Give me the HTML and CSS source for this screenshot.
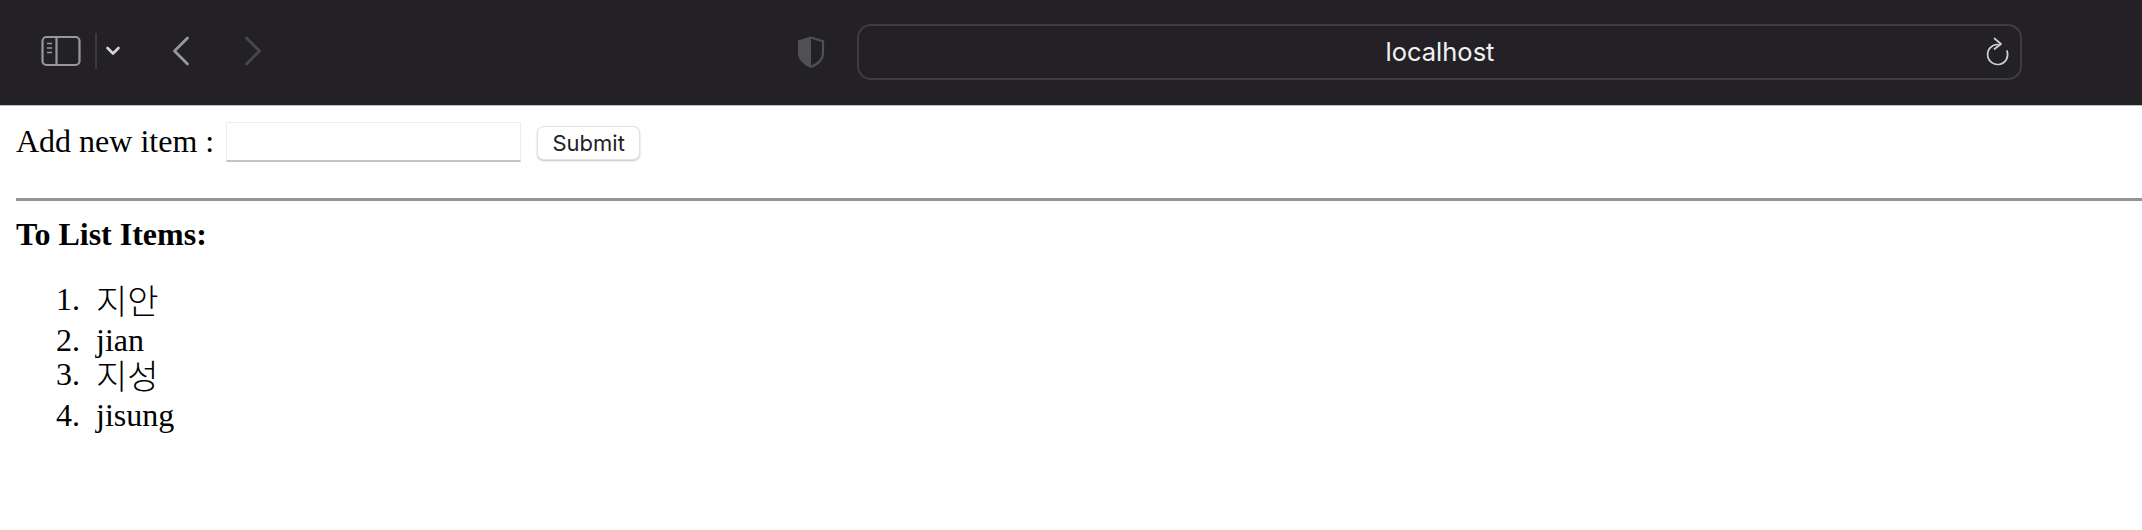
FILE: index.html
```html
<!DOCTYPE html>
<html lang="ko">
<head>
  <meta charset="UTF-8" />
  <title>localhost</title>
  <link rel="stylesheet" href="styles.css">
</head>
<body>
  <div class="toolbar">
    <div class="nav-group">
      <svg class="icon-sidebar" width="40" height="32" viewBox="0 0 40 32" fill="none" stroke="#98989b" stroke-width="2.2">
        <rect x="1.5" y="2" width="37" height="28" rx="4"/>
        <path d="M15.5 2v28"/>
        <path d="M6 8.5h5M6 13h5M6 17.5h5" stroke-width="1.6"/>
      </svg>
      <div class="divider"></div>
      <svg class="icon-chevron" width="16" height="12" viewBox="0 0 16 12" fill="none" stroke="#d6d6d7" stroke-width="2.6" stroke-linecap="round" stroke-linejoin="round">
        <path d="M2.5 3l5.500 5.500L13.500 3"/>
      </svg>
      <svg class="icon-back" width="18" height="30" viewBox="0 0 18 30" fill="none" stroke="#98989b" stroke-width="2.8" stroke-linecap="round" stroke-linejoin="round">
        <path d="M15.500 2L2.500 15l13 13"/>
      </svg>
      <svg class="icon-forward" width="18" height="30" viewBox="0 0 18 30" fill="none" stroke="#48484b" stroke-width="2.8" stroke-linecap="round" stroke-linejoin="round">
        <path d="M2.500 2l13 13-13 13"/>
      </svg>
    </div>
    <svg class="icon-shield" width="30" height="34" viewBox="0 0 30 34">
      <path d="M15 1.500L2 5.500v13C2 25 8 30 15 33z" fill="#515154"/>
      <path d="M15 2.500l12 3.800v12.200c0 6-5 10.500-12 13.500" fill="none" stroke="#515154" stroke-width="2.200"/>
    </svg>
    <div class="address-bar">
      <span class="address-text">localhost</span>
      <svg class="icon-reload" width="26" height="30" viewBox="0 0 26 30" fill="none" stroke="#d0d0d1" stroke-width="1.7" stroke-linecap="round" stroke-linejoin="round">
        <path d="M14 7.500A10 10 0 1 0 23 14"/>
        <path d="M10.500 1.500l6.500 5.500-6.500 5"/>
      </svg>
    </div>
  </div>

  <div class="content">
    <form class="add-form">
      <label class="add-label">Add new item :</label>
      <input class="add-input" type="text" />
      <button class="add-button" type="button">Submit</button>
    </form>
    <hr class="rule" />
    <h4 class="list-title">To List Items:</h4>
    <ol class="items">
      <li class="item-ko"><span class="ko-text">지안</span></li>
      <li class="item-en">jian</li>
      <li class="item-ko"><span class="ko-text">지성</span></li>
      <li class="item-en">jisung</li>
    </ol>
  </div>
</body>
</html>
```

FILE: styles.css
```css
body {
  margin: 0;
  background-color: #fff;
  color: #000;
  font-family: "Liberation Serif", "Noto Sans CJK KR", serif;
}

/* browser chrome */
.toolbar {
  height: 106px;
  padding-bottom: 2px;
  background-color: #232126;
  border-bottom: 1px solid #bdbdbd;
  box-sizing: border-box;
  display: flex;
  align-items: center;
}

.nav-group {
  display: flex;
  align-items: center;
  width: 796px;
  padding-left: 41px;
  box-sizing: border-box;
  height: 36px;
  margin-bottom: 2px;
}

.divider {
  width: 2px;
  height: 36px;
  margin-left: 14px;
  background-color: #3b3a3e;
}

.icon-chevron {
  margin-left: 8px;
}

.icon-back {
  margin-left: 51px;
}

.icon-forward {
  margin-left: 54px;
}

.icon-shield {
  margin-right: 31px;
}

.address-bar {
  width: 1165px;
  height: 56px;
  box-sizing: border-box;
  border: 2px solid #3d3c41;
  border-radius: 14px;
  display: flex;
  align-items: center;
  justify-content: flex-end;
  padding-right: 10px;
  position: relative;
}

.address-text {
  position: absolute;
  left: 1px;
  right: 0;
  text-align: center;
  color: #f2f2f3;
  font-family: "Inter", "Liberation Sans", sans-serif;
  font-size: 25.5px;
}

/* page */
.content {
  padding-left: 16px;
  padding-bottom: 60px;
}

.add-form {
  display: flex;
  align-items: center;
  height: 92px;
  padding-bottom: 21px;
  box-sizing: border-box;
}

.add-label {
  font-size: 32px;
}

.add-input {
  width: 295px;
  height: 40px;
  box-sizing: border-box;
  margin-left: 12px;
  background: #fff;
  border: 1px solid #ededed;
  border-bottom: 2px solid #c4c4c4;
}

.add-button {
  width: 103px;
  height: 34px;
  margin-left: 16px;
  margin-top: 2px;
  background: #fff;
  border: 1px solid #e2e2e2;
  border-radius: 7px;
  box-shadow: 0 1px 2px #c4c4c4;
  font-family: "Inter", "Liberation Sans", sans-serif;
  font-size: 22px;
  color: #222;
  padding: 0;
}

.rule {
  margin: 0;
  height: 3px;
  border: none;
  background-color: #949494;
}

.list-title {
  margin: 15px 0 0;
  font-size: 32px;
  line-height: 37px;
}

.items {
  margin: 28px 0 0;
  padding: 0 0 40px 80px;
  font-size: 32px;
}

.items li::marker {
  content: counter(list-item) ".\00a0\00a0";
}

.item-ko {
  line-height: 36px;
  padding-bottom: 5px;
}

.ko-text {
  font-size: 34px;
  font-weight: 300;
  line-height: 34px;
  vertical-align: -4px;
}

.item-en {
  line-height: 31px;
}
```
